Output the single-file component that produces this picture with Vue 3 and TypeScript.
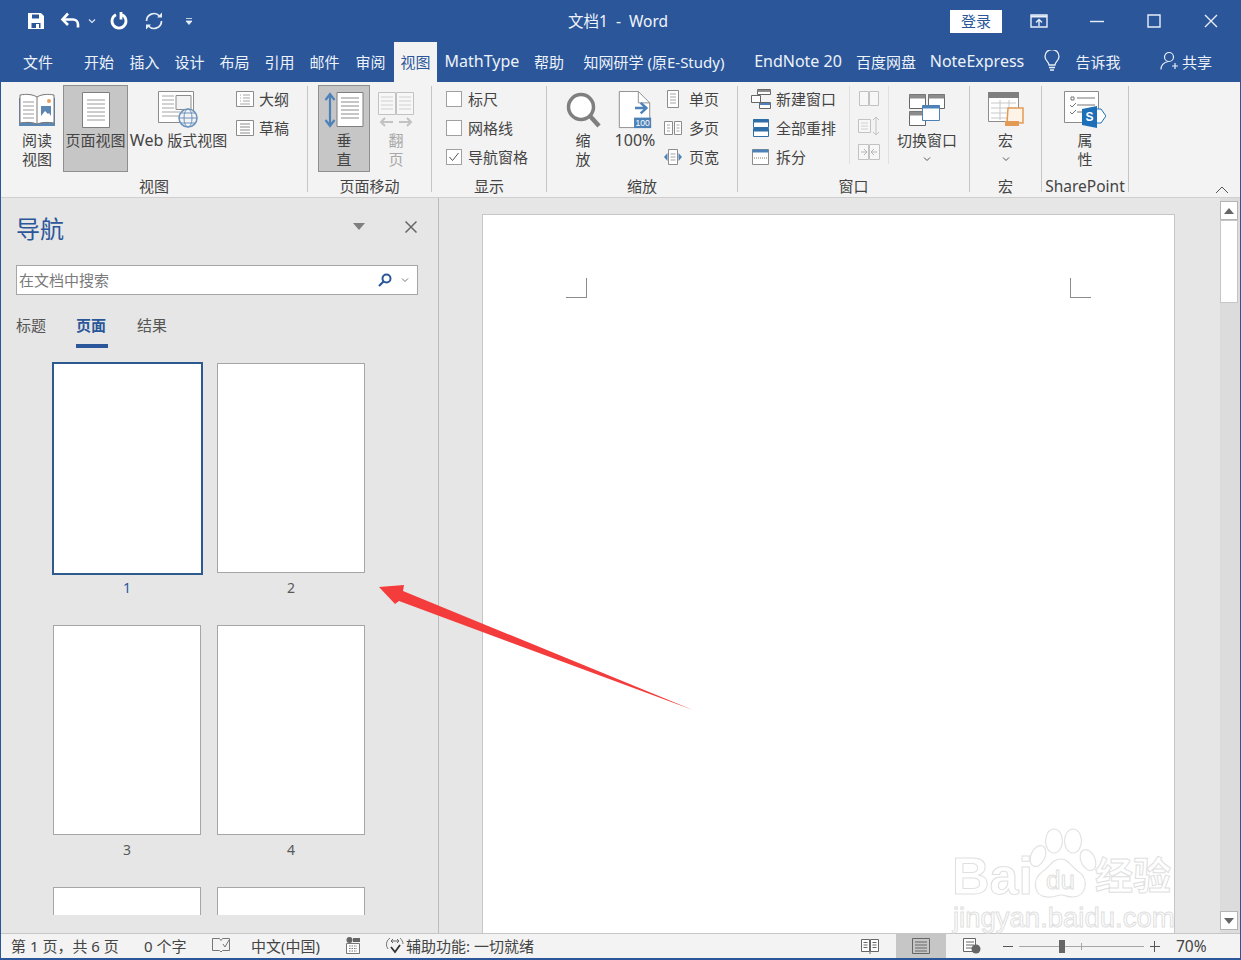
<script setup lang="ts">
/** Word 视图选项卡 + 导航窗格（页面缩略图） */
interface Tab {
  label: string;
  width: number;
  active?: boolean;
  latin?: boolean;
}

const tabs: Tab[] = [
  { label: "开始", width: 46 },
  { label: "插入", width: 45 },
  { label: "设计", width: 45 },
  { label: "布局", width: 45 },
  { label: "引用", width: 45 },
  { label: "邮件", width: 45 },
  { label: "审阅", width: 47 },
  { label: "视图", width: 43, active: true },
  { label: "MathType", width: 90, latin: true },
  { label: "帮助", width: 44 },
  { label: "知网研学 (原E-Study)", width: 166 },
  { label: "EndNote 20", width: 122, latin: true },
  { label: "百度网盘", width: 54 },
  { label: "NoteExpress", width: 128, latin: true },
];

const thumbs = [1, 2, 3, 4, 5, 6];
</script>

<template>
  <div class="word">
    <header class="titlebar">
      <div class="qat">
        <svg width="18" height="18" viewBox="0 0 18 18" class="q-save">
          <path d="M1 1h13l3 3v13H1z" fill="#fff" />
          <path d="M5 2.500h7v4H5z" fill="#2b579a" />
          <path d="M4.500 11h9v5h-9z" fill="#2b579a" />
          <path d="M9 12h3v4H9z" fill="#fff" />
        </svg>
        <svg width="22" height="18" viewBox="0 0 22 18" class="q-undo">
          <path d="M3 7.500h10a5 5 0 0 1 5 5v3" fill="none" stroke="#fff" stroke-width="2.600" />
          <path d="M8 1.500 2.500 7.500 8 13" fill="none" stroke="#fff" stroke-width="2.600" />
        </svg>
        <svg width="8" height="6" viewBox="0 0 8 6" class="q-chev">
          <path d="M1 1.500 4 4.500 7 1.500" fill="none" stroke="#dfe7f3" stroke-width="1.200" />
        </svg>
        <svg width="20" height="20" viewBox="0 0 20 20" class="q-redo">
          <path d="M7 3.800a7 7 0 1 0 6 0" fill="none" stroke="#fff" stroke-width="2.800" />
          <path d="M12 1v7.500" fill="none" stroke="#fff" stroke-width="2.800" />
        </svg>
        <svg width="20" height="20" viewBox="0 0 20 20" class="q-sync">
          <path d="M2.500 10a7.500 7.500 0 0 1 13-5" fill="none" stroke="#e8eef7" stroke-width="1.700" />
          <path d="M17.500 10a7.500 7.500 0 0 1-13 5" fill="none" stroke="#e8eef7" stroke-width="1.700" />
          <path d="M13 6.500h5v-5zM7 13.500H2v5z" fill="#e8eef7" />
        </svg>
        <svg width="8" height="9" viewBox="0 0 8 9" class="q-more">
          <path d="M1 1.500h6M1 4h6L4 7.500z" fill="#e8eef7" stroke="#e8eef7" stroke-width="0.800" />
        </svg>
      </div>
      <div class="doc-title">文档1&nbsp; -&nbsp; Word</div>
      <button type="button" class="signin">登录</button>
      <div class="winctl">
        <svg width="18" height="14" viewBox="0 0 18 14">
          <path d="M1 1h16v12H1z" fill="none" stroke="#e8eef7" stroke-width="1.400" />
          <path d="M1 2.500h16" stroke="#e8eef7" stroke-width="2" />
          <path d="M9 12V6M6 8.500l3-3 3 3" fill="none" stroke="#e8eef7" stroke-width="1.400" />
        </svg>
        <svg width="14" height="14" viewBox="0 0 14 14" class="w-min">
          <path d="M0 7.500h14" stroke="#e8eef7" stroke-width="1.400" />
        </svg>
        <svg width="14" height="14" viewBox="0 0 14 14" class="w-max">
          <path d="M1 1h12v12H1z" fill="none" stroke="#e8eef7" stroke-width="1.400" />
        </svg>
        <svg width="14" height="14" viewBox="0 0 14 14" class="w-close">
          <path d="M1 1l12 12M13 1 1 13" stroke="#e8eef7" stroke-width="1.400" />
        </svg>
      </div>
    </header>

    <nav class="tabs">
      <span class="tab tab--file">文件</span>
      <span
        v-for="t in tabs"
        :key="t.label"
        class="tab"
        :class="{ 'tab--active': t.active, 'tab--latin': t.latin }"
        :style="{ width: t.width + 'px' }"
      >{{ t.label }}</span>
      <span class="tab tab--bulb">
        <svg width="16" height="22" viewBox="0 0 16 22">
          <path d="M5 15c0-3-4-4.500-4-8.500a7 7 0 0 1 14 0c0 4-4 5.500-4 8.500z" fill="none" stroke="#e8eef7" stroke-width="1.300" />
          <path d="M5 17.500h6M6 20h4" stroke="#e8eef7" stroke-width="1.400" />
        </svg>
      </span>
      <span class="tab tab--tell">告诉我</span>
      <span class="tab tab--share">
        <svg width="18" height="20" viewBox="0 0 18 20">
          <circle cx="9" cy="6" r="4.500" fill="none" stroke="#e8eef7" stroke-width="1.200" />
          <path d="M1 18.500c0-4 3-7 7-8M12 15h6M15 12v6" fill="none" stroke="#e8eef7" stroke-width="1.200" />
        </svg>
        共享
      </span>
    </nav>

    <section class="ribbon">
      <div class="group g-views">
        <div class="gbody">
          <div class="big big--read" style="width: 61px">
            <svg width="38" height="34" viewBox="0 0 38 34" class="ic">
              <path d="M1 5h36v28H1z" fill="#5b87b5" />
              <path d="M2 2c6-1 12-1 17 2 5-3 11-3 17-2v28c-6-1-12-1-17 1-5-2-11-2-17-1z" fill="#fff" stroke="#777" />
              <path d="M19 4v27" stroke="#777" />
              <path d="M5 9h11M5 13h11M5 17h11M5 21h11M5 25h11" stroke="#9a9a9a" />
              <path d="M23 13h10v10H23z" fill="#5b87b5" />
              <path d="M23 23l4-5 3 3 1-1 2 3z" fill="#fff" />
              <circle cx="31" cy="8" r="2" fill="#e5a35f" />
            </svg>
            <span>阅读<br />视图</span>
          </div>
          <div class="big big--on" style="width: 65px">
            <svg width="28" height="36" viewBox="0 0 28 36" class="ic">
              <path d="M.5.500h27v35H.500z" fill="#fff" stroke="#7f7f7f" />
              <path d="M5 8h18M5 12h18M5 16h18M5 20h18M5 24h18M5 28h18" stroke="#9a9a9a" />
            </svg>
            <span>页面视图</span>
          </div>
          <div class="big" style="width: 101px">
            <svg width="42" height="38" viewBox="0 0 42 38" class="ic">
              <path d="M.5.500h35v31H.500z" fill="#fff" stroke="#8c8c8c" />
              <path d="M4 5h12M4 9h12M4 13h12M4 17h12M4 21h18M4 25h18" stroke="#a5a5a5" />
              <path d="M18 4.500h15v14H18z" fill="#f3f3f3" stroke="#8c8c8c" />
              <circle cx="30" cy="27" r="9" fill="#f3f3f3" stroke="#6b93bd" stroke-width="1.500" />
              <ellipse cx="30" cy="27" rx="4" ry="9" fill="none" stroke="#6b93bd" />
              <path d="M21 27h18M23 22h14M23 32h14" stroke="#6b93bd" />
            </svg>
            <span><b class="lat">Web</b> 版式视图</span>
          </div>
          <div class="col col--views">
            <div class="small">
              <svg width="18" height="16" viewBox="0 0 18 16">
                <path d="M.5.500h17v15H.500z" fill="#fff" stroke="#8c8c8c" />
                <path d="M4 4h1M4 7h1M4 10h1M7 4h7M7 7h7M7 10h7M4 13h10" stroke="#a5a5a5" />
              </svg>
              <span>大纲</span>
            </div>
            <div class="small">
              <svg width="18" height="16" viewBox="0 0 18 16">
                <path d="M.5.500h17v15H.500z" fill="#fff" stroke="#8c8c8c" />
                <path d="M4 4h10M4 7h10M4 10h10M4 13h10" stroke="#8c8c8c" />
              </svg>
              <span>草稿</span>
            </div>
          </div>
        </div>
        <div class="glabel">视图</div>
      </div>

      <div class="group g-move">
        <div class="gbody">
          <div class="big big--on" style="width: 52px">
            <svg width="40" height="36" viewBox="0 0 40 36" class="ic ic--move">
              <path d="M13 .500h26v34H13z" fill="#fff" stroke="#7f7f7f" />
              <path d="M17 6h18M17 10h18M17 14h18M17 18h18M17 22h18M17 26h18" stroke="#8c8c8c" />
              <path d="M6 2v32M1.500 8 6 2l4.500 6M1.500 28 6 34l4.500-6" fill="none" stroke="#4d82b8" stroke-width="2.200" />
            </svg>
            <span>垂<br />直</span>
          </div>
          <div class="big big--off" style="width: 52px">
            <svg width="36" height="36" viewBox="0 0 36 36" class="ic">
              <path d="M.5.500h17v22H.500zM18.500.500h17v22h-17z" fill="#f7f7f7" stroke="#c2c2c2" />
              <path d="M3 5h12M3 9h12M3 13h12M3 17h12M21 5h12M21 9h12M21 13h12M21 17h12" stroke="#d0d0d0" />
              <path d="M3 30h12M7 26l-4 4 4 4M33 30H21M29 26l4 4-4 4" fill="none" stroke="#c2c2c2" stroke-width="2" />
            </svg>
            <span>翻<br />页</span>
          </div>
        </div>
        <div class="glabel">页面移动</div>
      </div>

      <div class="group g-show">
        <div class="gbody">
          <div class="col col--show">
            <label class="check"><i></i>标尺</label>
            <label class="check"><i></i>网格线</label>
            <label class="check">
              <i>
                <svg width="14" height="14" viewBox="0 0 14 14"><path d="M2.500 7l3 3.500 6-7.500" fill="none" stroke="#555" /></svg>
              </i>导航窗格
            </label>
          </div>
        </div>
        <div class="glabel">显示</div>
      </div>

      <div class="group g-zoom">
        <div class="gbody">
          <div class="big" style="width: 52px">
            <svg width="36" height="38" viewBox="0 0 36 38" class="ic">
              <circle cx="16" cy="16" r="12.500" fill="#fff" stroke="#7f7f7f" stroke-width="3.500" />
              <path d="M25 25l9 10" stroke="#7f7f7f" stroke-width="4.500" />
            </svg>
            <span>缩<br />放</span>
          </div>
          <div class="big" style="width: 52px">
            <svg width="34" height="40" viewBox="0 0 34 40" class="ic">
              <path d="M.5.500h20l12 12v26H.500z" fill="#fff" stroke="#8c8c8c" />
              <path d="M20.500.500v12h12" fill="none" stroke="#8c8c8c" />
              <path d="M17 18h11M23 12.500l6 5.500-6 5.500" fill="none" stroke="#4d82b8" stroke-width="2.600" />
              <rect x="16" y="28" width="18" height="11" fill="#4d82b8" />
              <text x="25" y="37" text-anchor="middle" font-size="9" fill="#fff" font-family="Liberation Sans, sans-serif">100</text>
            </svg>
            <span class="lat">100%</span>
          </div>
          <div class="col col--zoom">
            <div class="small small--zoom">
              <svg width="18" height="18" viewBox="0 0 18 18">
                <path d="M3.500.500h11v17h-11z" fill="#fff" stroke="#8c8c8c" />
                <path d="M6 4h6M6 7h6M6 10h6M6 13h6" stroke="#a5a5a5" />
              </svg>
              <span>单页</span>
            </div>
            <div class="small small--zoom">
              <svg width="18" height="18" viewBox="0 0 18 18">
                <path d="M.5 2.500h8v13h-8zM10.500 2.500h7v13h-7z" fill="#fff" stroke="#8c8c8c" />
                <path d="M3 6h3M3 9h3M3 12h3M12.500 6h3M12.500 9h3M12.500 12h3" stroke="#a5a5a5" />
              </svg>
              <span>多页</span>
            </div>
            <div class="small small--zoom">
              <svg width="18" height="18" viewBox="0 0 18 18">
                <path d="M4.500 1.500h9v15h-9z" fill="#fff" stroke="#8c8c8c" />
                <path d="M6.500 6h5M6.500 9h5M6.500 12h5" stroke="#a5a5a5" />
                <path d="M3.500 5v8L0 9zM14.500 5v8L18 9z" fill="#4d82b8" />
              </svg>
              <span>页宽</span>
            </div>
          </div>
        </div>
        <div class="glabel">缩放</div>
      </div>

      <div class="group g-window">
        <div class="gbody">
          <div class="col col--win">
            <div class="small">
              <svg width="20" height="20" viewBox="0 0 20 20">
                <path d="M.5 6.500h9v7h-9zM6.500.500h13v5h-13zM8.500 13.500h11v6h-11z" fill="#fff" stroke="#666" />
                <path d="M6.500 1h13v2h-13z" fill="#8c8c8c" />
                <path d="M8.500 14h11v2h-11z" fill="#4d82b8" />
              </svg>
              <span>新建窗口</span>
            </div>
            <div class="small">
              <svg width="20" height="20" viewBox="0 0 20 20">
                <path d="M2.500 1.500h15v8h-15zM2.500 10.500h15v8h-15z" fill="#fff" stroke="#2f6fa8" />
                <path d="M2.500 1.500h15v3h-15zM2.500 10.500h15v3h-15z" fill="#2f6fa8" />
              </svg>
              <span>全部重排</span>
            </div>
            <div class="small">
              <svg width="20" height="20" viewBox="0 0 20 20">
                <path d="M1.500 2.500h16v15h-16z" fill="#fff" stroke="#8c8c8c" />
                <path d="M1.500 2.500h16v3h-16z" fill="#4d82b8" />
                <path d="M3 11h13" stroke="#777" stroke-dasharray="1 1" />
              </svg>
              <span>拆分</span>
            </div>
          </div>
          <div class="col col--disabled">
            <svg width="20" height="16" viewBox="0 0 20 16">
              <path d="M.5.500h9v14h-9zM10.500.500h9v14h-9z" fill="#f7f7f7" stroke="#c2c2c2" />
            </svg>
            <svg width="22" height="20" viewBox="0 0 22 20">
              <path d="M.5 3.500h12v13H.500z" fill="#f7f7f7" stroke="#c2c2c2" />
              <path d="M3 7h7M3 10h7M3 13h7" stroke="#d0d0d0" />
              <path d="M18 1v18M15 4l3-3 3 3M15 16l3 3 3-3" fill="none" stroke="#c2c2c2" />
            </svg>
            <svg width="22" height="16" viewBox="0 0 22 16">
              <path d="M.5.500h10v15H.500zM11.500.500h10v15h-10z" fill="#f7f7f7" stroke="#c2c2c2" />
              <path d="M3 8h5M6 5l3 3-3 3M19 8h-5M16 5l-3 3 3 3" fill="none" stroke="#b5b5b5" />
            </svg>
          </div>
          <div class="big big--switch" style="width: 80px">
            <svg width="36" height="32" viewBox="0 0 36 32" class="ic">
              <path d="M.5.500h16v14H.500zM19.500.500h16v14h-16zM.5 17.500h16v14H.500z" fill="#fff" stroke="#666" />
              <path d="M.5.500h16v4H.500zM19.500.500h16v4h-16zM.5 17.500h16v4H.500z" fill="#8c8c8c" />
              <path d="M13.500 11.500h17v15h-17z" fill="#fff" stroke="#4d82b8" />
              <path d="M13.500 11.500h17v3h-17z" fill="#4d82b8" />
            </svg>
            <span>切换窗口</span>
            <svg width="8" height="6" viewBox="0 0 8 6" class="chev">
              <path d="M1 1.500 4 4.500 7 1.500" fill="none" stroke="#555" />
            </svg>
          </div>
        </div>
        <div class="glabel">窗口</div>
      </div>

      <div class="group g-macro">
        <div class="gbody">
          <div class="big" style="width: 71px">
            <svg width="36" height="36" viewBox="0 0 36 36" class="ic">
              <path d="M.5.500h30v29H.500z" fill="#fff" stroke="#8c8c8c" />
              <path d="M0 0h31v6H0z" fill="#7f7f7f" />
              <path d="M3 11h25M3 16h25M3 21h25M3 26h25M12 8v20M21 8v20" stroke="#c8c8c8" />
              <path d="M20 16h15v15H19z" fill="#fdf3e6" stroke="#e39a55" stroke-width="1.500" />
              <path d="M17 29h14v5H17z" fill="#e39a55" />
            </svg>
            <span>宏</span>
            <svg width="8" height="6" viewBox="0 0 8 6" class="chev">
              <path d="M1 1.500 4 4.500 7 1.500" fill="none" stroke="#555" />
            </svg>
          </div>
        </div>
        <div class="glabel">宏</div>
      </div>

      <div class="group g-sp">
        <div class="gbody">
          <div class="big" style="width: 86px">
            <svg width="42" height="38" viewBox="0 0 42 38" class="ic">
              <path d="M.5.500h34v31H.500z" fill="#fff" stroke="#8c8c8c" />
              <path d="M7 6h3v3H7zM13 7h18M13 14h18M13 21h9" fill="none" stroke="#777" />
              <path d="M6 14l2 2 4-4M6 21l2 2 4-4" fill="none" stroke="#777" />
              <path d="M30 18h7l5 7-5 7h-7z" fill="#fff" stroke="#1d70b8" />
              <path d="M18 18l15-3v22l-15-3z" fill="#1d70b8" />
              <text x="25.500" y="30" text-anchor="middle" font-size="12" font-weight="700" fill="#fff" font-family="Liberation Sans, sans-serif">S</text>
            </svg>
            <span>属<br />性</span>
          </div>
        </div>
        <div class="glabel glabel--lat">SharePoint</div>
      </div>

      <div class="collapse">
        <svg width="14" height="8" viewBox="0 0 14 8">
          <path d="M1 7 7 1l6 6" fill="none" stroke="#555" />
        </svg>
      </div>
    </section>

    <main class="workspace">
      <aside class="navpane">
        <div class="nav-head">
          <h2>导航</h2>
          <svg width="12" height="7" viewBox="0 0 12 7" class="nav-tri"><path d="M0 0h12L6 7z" fill="#7f7f7f" /></svg>
          <svg width="12" height="12" viewBox="0 0 12 12" class="nav-x"><path d="M.5.500l11 11M11.500.500l-11 11" stroke="#666" stroke-width="1.500" /></svg>
        </div>
        <div class="search">
          <span class="search-ph">在文档中搜索</span>
          <svg width="14" height="14" viewBox="0 0 14 14" class="search-ic">
            <circle cx="8.500" cy="5.500" r="4" fill="none" stroke="#2b579a" stroke-width="2" />
            <path d="M5.500 8.500 1 13" stroke="#2b579a" stroke-width="2.200" />
          </svg>
          <svg width="8" height="6" viewBox="0 0 8 6" class="search-chev"><path d="M1 1.500 4 4.500 7 1.500" fill="none" stroke="#777" /></svg>
        </div>
        <div class="nav-tabs">
          <span>标题</span>
          <span class="on">页面</span>
          <span>结果</span>
        </div>
        <div class="thumbs">
          <figure v-for="n in thumbs" :key="n" class="thumb" :class="{ 'thumb--on': n === 1 }">
            <div class="sheet"></div>
            <figcaption v-if="n < 5">{{ n }}</figcaption>
          </figure>
        </div>
      </aside>

      <div class="docarea">
        <div class="page">
          <i class="crop crop--l"></i>
          <i class="crop crop--r"></i>
        </div>
      </div>

      <div class="scrollbar">
        <span class="sbtn"><svg width="10" height="6" viewBox="0 0 10 6"><path d="M0 6h10L5 0z" fill="#666" /></svg></span>
        <span class="sthumb"></span>
        <span class="strack"></span>
        <span class="sbtn"><svg width="10" height="6" viewBox="0 0 10 6"><path d="M0 0h10L5 6z" fill="#666" /></svg></span>
      </div>
    </main>

    <footer class="status">
      <span class="st st-page">第 1 页，共 6 页</span>
      <span class="st st-count">0 个字</span>
      <svg width="18" height="16" viewBox="0 0 18 16" class="st-proof">
        <path d="M.5 1.500h7l1.500 2 1.500-2h7v12h-7L9 15l-1.500-1.500h-7z" fill="none" stroke="#777" />
        <path d="M11 7l2 3 4-7" fill="none" stroke="#777" />
      </svg>
      <span class="st st-lang">中文(中国)</span>
      <svg width="14" height="18" viewBox="0 0 14 18" class="st-macro">
        <circle cx="3.500" cy="4" r="3" fill="#666" />
        <path d="M7 2h7v4H7z" fill="#666" />
        <path d="M.5 7.500h13v10H.500z" fill="#fff" stroke="#777" />
        <path d="M3 10h8M3 12.500h8M3 15h8" stroke="#777" stroke-dasharray="1.500 1" />
      </svg>
      <svg width="20" height="18" viewBox="0 0 20 18" class="st-a11y">
        <path d="M5 2a7.500 7.500 0 0 0-2 11M15 2c2 2 3 4 3 6" fill="none" stroke="#777" />
        <path d="M7 5h6M8 3 6 5l2 2M12 3l2 2-2 2" fill="none" stroke="#666" />
        <path d="M6 11l4 5 5-7" fill="none" stroke="#333" stroke-width="1.800" />
      </svg>
      <span class="st st-a11y-t">辅助功能: 一切就绪</span>
      <span class="st-right">
        <svg width="18" height="16" viewBox="0 0 18 16" class="st-read">
          <path d="M.5 1.500h8v12h-8zM9.500 1.500h8v12h-8z" fill="#fff" stroke="#666" />
          <path d="M2.500 4.500h4M2.500 7h4M2.500 9.500h4M11.500 4.500h4M11.500 7h4M11.500 9.500h4M9 13v3" stroke="#666" />
        </svg>
        <span class="st-active">
          <svg width="18" height="16" viewBox="0 0 18 16">
            <path d="M.5.500h17v15H.500z" fill="none" stroke="#666" />
            <path d="M3 4h12M3 7h12M3 10h12M3 13h12" stroke="#666" />
          </svg>
        </span>
        <svg width="18" height="16" viewBox="0 0 18 16" class="st-web">
          <path d="M.5.500h12v13H.500z" fill="#fff" stroke="#666" />
          <path d="M3 4h8M3 7h8M3 10h6" stroke="#666" />
          <circle cx="13" cy="11" r="4.500" fill="#666" />
        </svg>
        <span class="z-minus"></span>
        <span class="z-track"><i class="z-tick"></i><i class="z-thumb"></i></span>
        <span class="z-plus"></span>
        <span class="st z-val">70%</span>
      </span>
    </footer>

    <!-- 截图上的标注箭头 -->
    <svg class="arrow" width="1241" height="960" viewBox="0 0 1241 960">
      <path d="M379 587 404 585 403 591 693 710 399 601 395 604z" fill="#f43c3c" />
    </svg>

    <!-- 百度经验水印 -->
    <div class="wm">
      <svg width="80" height="80" viewBox="0 0 80 80" class="wm-paw">
        <g fill="rgba(255,255,255,.6)" stroke="#e2e2e2" stroke-width="1.200">
          <ellipse cx="28" cy="16" rx="8.500" ry="12" />
          <ellipse cx="47" cy="16" rx="8.500" ry="12" />
          <ellipse cx="12" cy="31" rx="7" ry="11" transform="rotate(25 12 31)" />
          <ellipse cx="62" cy="35" rx="7" ry="11" transform="rotate(-25 62 35)" />
          <path d="M35 34c8 0 10 8 18 13 10 7 8 24-6 25-6 0-8-2-12-2s-8 3-14 2C7 71 6 54 16 47c8-5 10-13 19-13z" />
        </g>
      </svg>
      <span class="wm-bai">Bai</span>
      <span class="wm-du">du</span>
      <span class="wm-jy">经验</span>
      <span class="wm-url">jingyan.baidu.com</span>
    </div>
  </div>
</template>

<style>
html,
body {
  margin: 0;
  background: #e6e6e6;
}
</style>

<style scoped>
.word {
  position: relative;
  display: flex;
  flex-direction: column;
  width: 1241px;
  height: 960px;
  overflow: hidden;
  box-sizing: border-box;
  border: 1px solid #2b579a;
  border-top: 0;
  border-bottom-width: 2px;
  color: #444;
  font-family: "Noto Sans", "Noto Sans CJK SC", sans-serif;
  font-size: 15px;
  background: #e6e6e6;
}

svg {
  display: block;
  flex: none;
}

.lat {
  font-size: 16px;
  font-weight: 400;
}

/* 标题栏 */
.titlebar {
  display: flex;
  align-items: center;
  flex: none;
  height: 42px;
  color: #f0f4fa;
  background: #2b579a;
}

.qat {
  display: flex;
  align-items: center;
  flex: none;
  box-sizing: border-box;
  width: 200px;
  padding-left: 26px;
}

.q-undo {
  margin-left: 15px;
}

.q-chev {
  margin-left: 6px;
}

.q-redo {
  margin-left: 13px;
}

.q-sync {
  margin-left: 15px;
}

.q-more {
  margin-left: 21px;
}

.doc-title {
  flex: none;
  box-sizing: border-box;
  width: 620px;
  padding-bottom: 2px;
  padding-left: 367px;
  font-size: 15.500px;
  white-space: nowrap;
}

.signin {
  flex: none;
  width: 52px;
  height: 23px;
  margin-left: 129px;
  padding: 0;
  color: #2b579a;
  font-family: inherit;
  font-size: 15px;
  line-height: 23px;
  background: #fff;
  border: 0;
}

.winctl {
  display: flex;
  align-items: center;
  margin-left: 28px;
}

.w-min {
  margin-left: 42px;
}

.w-max {
  margin-left: 43px;
}

.w-close {
  margin-left: 43px;
}

/* 选项卡行 */
.tabs {
  display: flex;
  flex: none;
  height: 40px;
  padding-left: 15px;
  color: #edf2f9;
  background: #2b579a;
}

.tab {
  display: flex;
  align-items: center;
  justify-content: center;
  flex: none;
  box-sizing: border-box;
  padding-bottom: 2px;
  white-space: nowrap;
  font-size: 15px;
}

.tab--latin {
  font-size: 16px;
}

.tab--file {
  width: 44px;
  margin-right: 16px;
}

.tab--active {
  color: #2b579a;
  background: #f3f3f3;
}

.tab--bulb {
  width: 22px;
}

.tab--tell {
  width: 70px;
}

.tab--share {
  gap: 4px;
  width: 80px;
  padding-left: 26px;
}

/* 功能区 */
.ribbon {
  position: relative;
  display: flex;
  flex: none;
  box-sizing: border-box;
  height: 116px;
  padding-top: 4px;
  background: #f3f3f3;
  border-bottom: 1px solid #cfcfcf;
}

.group {
  display: flex;
  flex-direction: column;
  flex: none;
  box-sizing: border-box;
  height: 106px;
  border-right: 1px solid #c6c6c6;
}

.g-views {
  width: 307px;
}

.g-move {
  width: 124px;
}

.g-show {
  width: 115px;
}

.g-zoom {
  width: 191px;
}

.g-window {
  width: 232px;
}

.g-macro {
  width: 72px;
}

.g-sp {
  width: 87px;
}

.gbody {
  display: flex;
  flex: none;
  height: 90px;
}

.g-views .gbody {
  padding-left: 1px;
}

.g-move .gbody {
  padding-left: 10px;
}

.g-zoom .gbody {
  padding-left: 10px;
}

.glabel {
  height: 17px;
  color: #444;
  font-size: 15px;
  line-height: 20px;
  text-align: center;
  white-space: nowrap;
}

.glabel--lat {
  font-size: 15.500px;
}

.big {
  display: flex;
  flex-direction: column;
  align-items: center;
  flex: none;
  box-sizing: border-box;
  height: 87px;
  margin-top: -1px;
  color: #444;
  line-height: 19px;
  text-align: center;
  white-space: nowrap;
}

.big span {
  display: block;
}

.big .ic {
  height: 38px;
  margin-top: 6px;
  margin-bottom: 2px;
}

.big--read {
  padding-left: 9px;
}

.big--on {
  background: #c6c6c6;
  border: 1px solid #8f8f8f;
}

.big--on .ic {
  margin-top: 5px;
}

.big--off {
  color: #a8a8a8;
}

.big--switch {
  margin-left: -2px;
}

.chev {
  margin-top: 6px;
}

.col {
  display: flex;
  flex-direction: column;
  flex: none;
}

.col--views {
  margin-top: -2px;
  margin-left: 7px;
}

.col--show {
  margin-top: -2px;
  margin-left: 14px;
}

.col--zoom {
  margin-top: -2px;
  margin-left: 3px;
}

.col--win {
  margin-top: -2px;
  margin-left: 13px;
}

.col--disabled {
  align-items: center;
  justify-content: space-between;
  box-sizing: border-box;
  width: 40px;
  height: 78px;
  margin-left: 13px;
  padding: 5px 0 4px;
  border-right: 1px solid #e0e0e0;
  border-left: 1px solid #e0e0e0;
}

.small {
  display: flex;
  align-items: center;
  gap: 5px;
  height: 29px;
  white-space: nowrap;
}

.small--zoom {
  gap: 7px;
}

.check {
  display: flex;
  align-items: center;
  gap: 6px;
  height: 29px;
  white-space: nowrap;
}

.check i {
  display: block;
  flex: none;
  box-sizing: border-box;
  width: 16px;
  height: 16px;
  background: #fff;
  border: 1px solid #a0a0a0;
}

.collapse {
  position: absolute;
  top: 104px;
  right: 11px;
}

/* 主区域 */
.workspace {
  display: flex;
  flex: 1;
  min-height: 0;
}

.navpane {
  display: flex;
  flex-direction: column;
  flex: none;
  box-sizing: border-box;
  width: 438px;
  border-right: 1px solid #bcbcbc;
}

.nav-head {
  display: flex;
  align-items: center;
  flex: none;
  height: 62px;
  padding-left: 15px;
}

.nav-head h2 {
  width: 337px;
  margin: 0;
  color: #2b579a;
  font-size: 24px;
  font-weight: 400;
  line-height: 62px;
}

.nav-tri {
  margin-top: -5px;
}

.nav-x {
  margin-top: -5px;
  margin-left: 40px;
}

.search {
  display: flex;
  align-items: center;
  flex: none;
  box-sizing: border-box;
  width: 402px;
  height: 30px;
  margin: 5px 0 0 15px;
  padding-bottom: 1px;
  padding-left: 2px;
  background: #fff;
  border: 1px solid #a6a6a6;
}

.search-ph {
  width: 359px;
  color: #7a7a7a;
  font-size: 15px;
}

.search-chev {
  margin-left: 9px;
}

.nav-tabs {
  display: flex;
  flex: none;
  height: 50px;
  padding-left: 15px;
  color: #555;
  line-height: 61px;
}

.nav-tabs span {
  margin-right: 30px;
}

.nav-tabs .on {
  box-sizing: content-box;
  width: 32px;
  height: 49px;
  margin-right: 29px;
  color: #2b579a;
  font-weight: 700;
  border-bottom: 4px solid #2b579a;
}

.thumbs {
  display: grid;
  grid-template-columns: 150px 150px;
  column-gap: 14px;
  align-content: start;
  flex: none;
  height: 553px;
  margin-top: 17px;
  padding-left: 51px;
  overflow: hidden;
}

.thumb {
  height: 262px;
  margin: 0;
  color: #595959;
  font-size: 14px;
  text-align: center;
}

.sheet {
  box-sizing: border-box;
  width: 148px;
  height: 210px;
  margin: 1px 0 0 1px;
  background: #fff;
  border: 1px solid #a6a6a6;
}

.thumb--on .sheet {
  width: 151px;
  height: 213px;
  margin: 0;
  border: 2px solid #2d5b8f;
}

.thumb figcaption {
  margin-top: 5px;
  line-height: 20px;
}

.thumb--on figcaption {
  margin-top: 3px;
  color: #2b579a;
}

.docarea {
  flex: 1;
  min-width: 0;
  padding: 16px 44px 0 43px;
}

.page {
  display: flex;
  justify-content: space-between;
  align-items: flex-start;
  box-sizing: border-box;
  width: 693px;
  height: 800px;
  padding: 63px 83px 0;
  background: #fff;
  border: 1px solid #c6c6c6;
}

.crop {
  display: block;
  width: 20px;
  height: 19px;
  border-bottom: 1px solid #8c8c8c;
}

.crop--l {
  border-right: 1px solid #8c8c8c;
}

.crop--r {
  border-left: 1px solid #8c8c8c;
}

.scrollbar {
  display: flex;
  flex-direction: column;
  flex: none;
  box-sizing: border-box;
  width: 20px;
  padding: 3px 2px 3px 0;
  background: #dcdcdc;
}

.sbtn {
  display: flex;
  align-items: center;
  justify-content: center;
  flex: none;
  box-sizing: border-box;
  height: 19px;
  background: #fff;
  border: 1px solid #b5b5b5;
}

.sthumb {
  flex: none;
  box-sizing: border-box;
  height: 83px;
  background: #fff;
  border: 1px solid #c6c6c6;
}

.strack {
  flex: 1;
}

/* 状态栏 */
.status {
  display: flex;
  align-items: center;
  flex: none;
  box-sizing: border-box;
  height: 25px;
  padding-bottom: 2px;
  color: #444;
  font-size: 15px;
  background: #f3f3f3;
  border-top: 1px solid #c6c6c6;
}

.st {
  white-space: nowrap;
}

.st-page {
  box-sizing: border-box;
  width: 133px;
  padding-left: 10px;
}

.st-count {
  width: 68px;
  margin-left: 10px;
}

.st-lang {
  width: 95px;
  margin-left: 21px;
}

.st-a11y {
  margin-left: 25px;
}

.st-a11y-t {
  margin-left: 1px;
}

.st-right {
  display: flex;
  align-items: center;
  align-self: stretch;
  margin-bottom: -2px;
  margin-left: auto;
}

.st-read {
  margin-right: 17px;
}

.st-active {
  display: flex;
  align-items: center;
  align-self: stretch;
  justify-content: center;
  width: 50px;
  background: #c6c6c6;
}

.st-web {
  margin-left: 17px;
}

.z-minus,
.z-plus {
  position: relative;
  display: block;
  width: 10px;
  height: 1px;
  background: #555;
}

.z-minus {
  margin-left: 22px;
}

.z-plus {
  margin-left: 6px;
}

.z-plus::after {
  position: absolute;
  top: -5px;
  left: 4px;
  width: 1px;
  height: 11px;
  background: #555;
  content: "";
}

.z-track {
  position: relative;
  display: block;
  width: 125px;
  height: 1px;
  margin-left: 6px;
  background: #a6a6a6;
}

.z-tick {
  position: absolute;
  top: -3px;
  left: 62px;
  width: 1px;
  height: 7px;
  background: #a6a6a6;
}

.z-thumb {
  position: absolute;
  top: -6px;
  left: 40px;
  width: 6px;
  height: 13px;
  background: #666;
}

.z-val {
  box-sizing: border-box;
  width: 80px;
  padding-left: 16px;
  font-size: 15.500px;
}

/* 标注与水印 */
.arrow {
  position: absolute;
  top: 0;
  left: -1px;
  pointer-events: none;
}

.wm {
  position: absolute;
  top: 820px;
  left: 949px;
  width: 230px;
  height: 120px;
  pointer-events: none;
}

.wm span {
  position: absolute;
  color: rgba(255, 255, 255, 0.4);
  -webkit-text-stroke: 1px #e0e0e0;
  white-space: nowrap;
}

.wm-paw {
  position: absolute;
  top: 5px;
  left: 76px;
}

.wm-bai {
  top: 26px;
  left: 2px;
  font-family: "Liberation Sans", sans-serif;
  font-size: 52px;
  font-weight: 700;
  line-height: 60px;
}

.wm-du {
  top: 44px;
  left: 96px;
  font-family: "Liberation Sans", sans-serif;
  font-size: 26px;
  line-height: 32px;
}

.wm-jy {
  top: 28px;
  left: 145px;
  font-size: 38px;
  font-weight: 700;
  line-height: 52px;
}

.wm-url {
  top: 80px;
  left: 3px;
  font-family: "Liberation Sans", sans-serif;
  font-size: 27.500px;
  line-height: 36px;
}
</style>
